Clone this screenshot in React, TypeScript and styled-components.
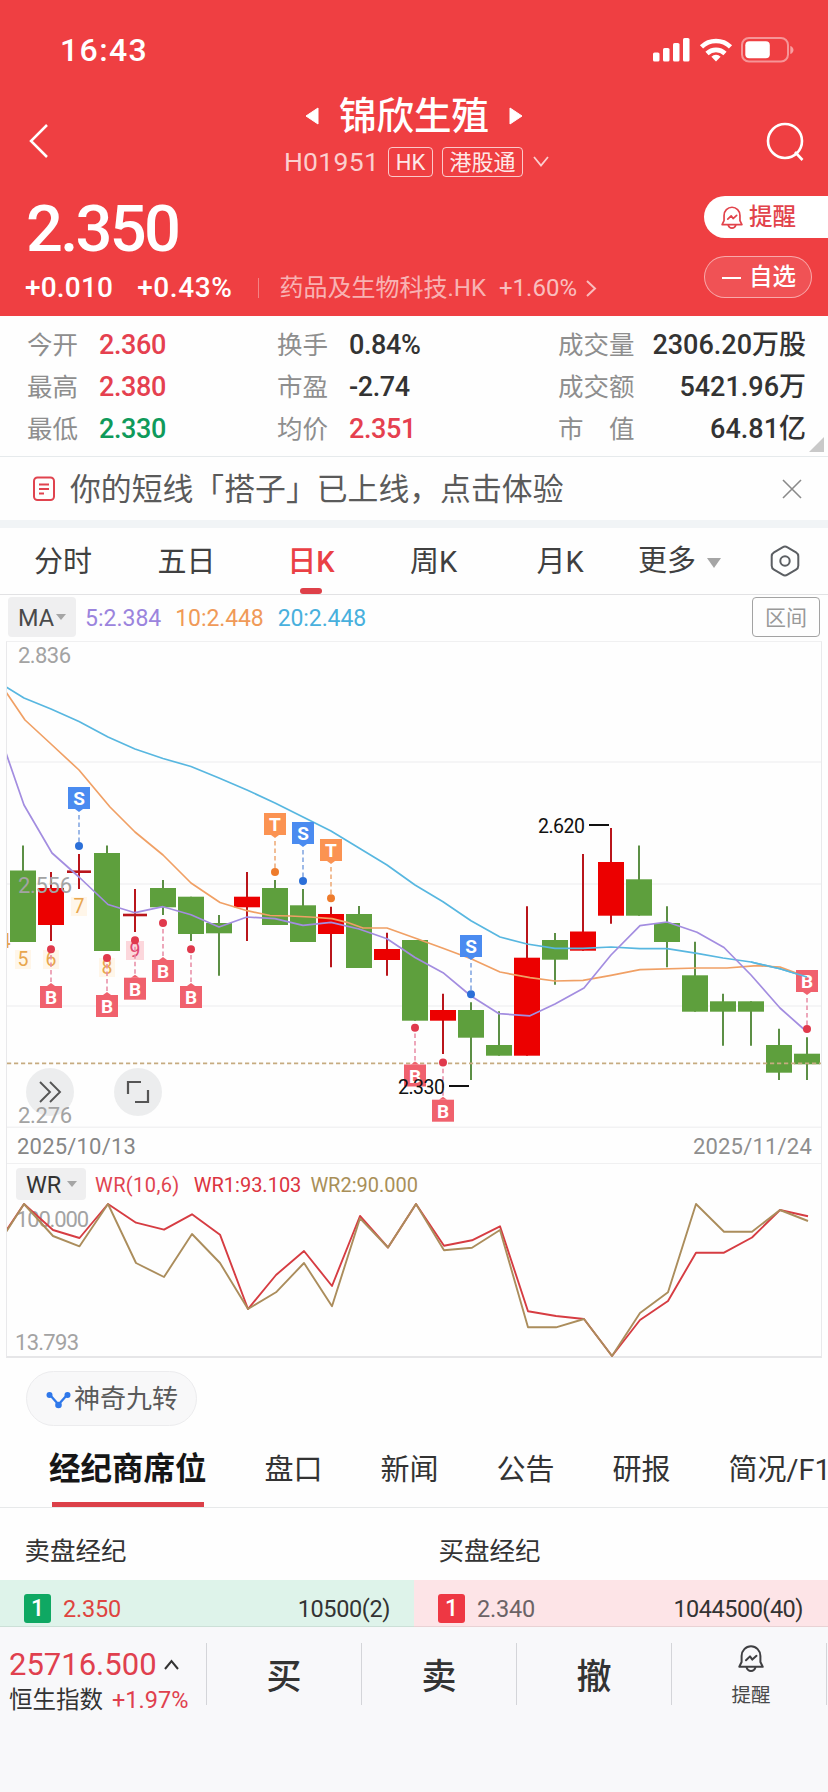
import React from "react";
import styled, { createGlobalStyle } from "styled-components";

const red = "#ef3f42";
const up = "#e5404f";
const down = "#0f9a5b";

const GlobalStyle = createGlobalStyle`
  * { box-sizing: border-box; }
  body {
    margin: 0;
    background: #f8f8fa;
    font-family: Roboto, "Noto Sans CJK SC", sans-serif;
    color: #333;
    overflow-x: hidden;
  }
`;

const Screen = styled.div`
  width: 828px;
  height: 1792px;
  overflow: hidden;
  display: flex;
  flex-direction: column;
  background: #fefefe;
`;

type TextProps = {
  $size: number;
  $spacing?: number;
  $color?: string;
  $weight?: number;
  $left?: number;
};

const Text = styled.span<TextProps>`
  display: block;
  flex: none;
  white-space: pre;
  line-height: 1.2;
  font-size: ${(p) => p.$size}px;
  letter-spacing: ${(p) => p.$spacing ?? 0}px;
  color: ${(p) => p.$color ?? "inherit"};
  font-weight: ${(p) => p.$weight ?? 400};
  margin-left: ${(p) => p.$left ?? 0}px;
`;

/* ---------- header ---------- */

const Header = styled.header`
  height: 316px;
  flex: none;
  background: ${red};
  color: #fff;
  display: flex;
  flex-direction: column;
`;

const StatusBar = styled.div`
  height: 92px;
  padding: 8px 33px 0 60px;
  display: flex;
  align-items: center;
  justify-content: space-between;
`;

const NavBar = styled.div`
  height: 96px;
  display: flex;
  justify-content: space-between;
  padding: 0 21px 0 26px;
`;

const NavSide = styled.div`
  width: 44px;
  padding-top: 27px;
`;

const NavCenter = styled.div`
  display: flex;
  flex-direction: column;
  align-items: center;
  padding-left: 1px;
`;

const TitleRow = styled.div`
  height: 48px;
  padding-right: 6px;
  display: flex;
  align-items: center;
  gap: 20px;
`;

const CodeRow = styled.div`
  height: 44px;
  display: flex;
  align-items: center;
  gap: 9px;
`;

const Tag = styled.span<{ $width: number }>`
  width: ${(p) => p.$width}px;
  height: 30px;
  border: 1.5px solid rgba(255, 255, 255, 0.72);
  border-radius: 4px;
  padding-top: 2px;
  display: flex;
  align-items: center;
  justify-content: center;
  font-size: 22px;
  line-height: 1;
  color: rgba(255, 255, 255, 0.9);
`;

const QuoteArea = styled.div`
  flex: 1;
  display: flex;
  justify-content: space-between;
`;

const PriceBlock = styled.div`
  padding-left: 25px;
`;

const PriceLine = styled.div`
  height: 82px;
  display: flex;
  align-items: center;
`;

const ChangeLine = styled.div`
  height: 36px;
  display: flex;
  align-items: center;
`;

const ThinRule = styled.i`
  width: 1px;
  height: 20px;
  margin: 0 20px 0 26px;
  background: rgba(255, 255, 255, 0.35);
`;

const QuoteActions = styled.div`
  width: 124px;
  padding-top: 8px;
  display: flex;
  flex-direction: column;
  gap: 18px;
`;

const AlertButton = styled.button`
  height: 42px;
  border: 0;
  border-radius: 21px 0 0 21px;
  background: #fff;
  color: #e2434b;
  padding: 1px 0 0 17px;
  display: flex;
  align-items: center;
  gap: 6px;
  font: 500 23.5px/1.1 Roboto, "Noto Sans CJK SC", sans-serif;
`;

const WatchButton = styled.button`
  width: 108px;
  height: 42px;
  border: 1.5px solid rgba(255, 255, 255, 0.5);
  border-radius: 21px;
  background: rgba(255, 255, 255, 0.1);
  color: #fff;
  padding: 1px 0 0 17px;
  display: flex;
  align-items: center;
  gap: 8px;
  font: 500 23.5px/1.1 Roboto, "Noto Sans CJK SC", sans-serif;
`;

const Minus = styled.i`
  width: 19px;
  height: 2px;
  background: #fff;
`;

/* ---------- stats ---------- */

const Stats = styled.section`
  position: relative;
  flex: none;
  height: 141px;
  padding: 8px 22px 7px 27px;
  display: grid;
  grid-template-columns: 250px 281px 1fr;
  grid-auto-rows: 42px;
  border-bottom: 1.5px solid #e6eaec;
`;

const Stat = styled.div<{ $spread?: boolean }>`
  display: flex;
  align-items: center;
  justify-content: ${(p) => (p.$spread ? "space-between" : "flex-start")};
`;

const Corner = styled.i`
  position: absolute;
  right: 4px;
  bottom: 4px;
  border-bottom: 15px solid #c9c9c9;
  border-left: 15px solid transparent;
`;

const Notice = styled.section`
  flex: none;
  height: 71px;
  border-bottom: 8px solid #f1f4f6;
  padding: 0 26px 0 32px;
  display: flex;
  align-items: center;
`;

const NoticeText = styled(Text)`
  padding-top: 2px;
`;

const NoticeClose = styled.span`
  margin-left: auto;
  display: flex;
`;

/* ---------- period tabs ---------- */

const PeriodTabs = styled.nav`
  flex: none;
  height: 67px;
  border-bottom: 1.5px solid #e2e2e4;
  display: grid;
  grid-template-columns: 126px 121px 128px 117px 136px 114px 86px;
`;

const PeriodTab = styled.span<{ $active?: boolean }>`
  display: flex;
  flex-direction: column;
  align-items: center;
  justify-content: space-between;
  padding-top: 14px;
  font-size: 29px;
  line-height: 40px;
  color: ${(p) => (p.$active ? "#ea4045" : "#404040")};
  font-weight: ${(p) => (p.$active ? 500 : 400)};
  &::after {
    content: "";
    width: 22px;
    height: 6px;
    border-radius: 3px;
    background: ${(p) => (p.$active ? "#de4049" : "transparent")};
  }
`;

const MoreTab = styled.span`
  display: flex;
  align-items: center;
  padding-left: 10px;
  gap: 11px;
  font-size: 29px;
  line-height: 40px;
  color: #404040;
  > i { margin-top: 3px; }
`;

const SettingsCell = styled.span`
  display: flex;
  align-items: center;
  padding-left: 28px;
`;

const Caret = styled.i<{ $w: number; $h: number }>`
  flex: none;
  border-top: ${(p) => p.$h}px solid #a5a5a5;
  border-left: ${(p) => p.$w / 2}px solid transparent;
  border-right: ${(p) => p.$w / 2}px solid transparent;
`;

/* ---------- charts ---------- */

const MaRow = styled.div`
  flex: none;
  height: 46px;
  padding: 2px 8px 4px;
  display: flex;
  align-items: center;
  > ${Text} { padding-top: 4px; }
`;

const Picker = styled.span<{ $w: number; $h: number; $gap: number; $pad: number }>`
  flex: none;
  width: ${(p) => p.$w}px;
  height: ${(p) => p.$h}px;
  border-radius: 4px;
  background: #efeff0;
  display: flex;
  align-items: center;
  padding-left: ${(p) => p.$pad}px;
  gap: ${(p) => p.$gap}px;
  color: #4a4a4a;
  > ${Text} { padding-top: 3px; }
`;

const RangeButton = styled.span`
  margin-left: auto;
  width: 68px;
  height: 40px;
  border: 1.5px solid #a3a3a3;
  border-radius: 4px;
  display: flex;
  align-items: center;
  justify-content: center;
  padding-top: 2px;
  font-size: 21px;
  line-height: 1;
  color: #999;
`;

const ChartFrame = styled.section`
  position: relative;
  flex: none;
  width: 816px;
  height: 717px;
  margin-left: 6px;
  border: 1px solid #e9e9eb;
  border-top-color: #f0f0f1;
  border-bottom: 2px solid #e6e6e8;
`;

const Plot = styled.svg`
  display: block;
  font-family: Roboto, sans-serif;
`;

const DateRow = styled.div`
  height: 36px;
  padding: 4px 9px 0 10px;
  display: flex;
  align-items: center;
  justify-content: space-between;
  border-bottom: 1.5px solid #f0f0f1;
`;

const WrRow = styled.div`
  height: 38px;
  padding: 2px 9px 0;
  display: flex;
  align-items: center;
  > ${Text} { padding-top: 2px; }
`;

const RoundButton = styled.span<{ $x: number }>`
  position: absolute;
  left: ${(p) => p.$x}px;
  top: 426px;
  width: 48px;
  height: 48px;
  border-radius: 50%;
  background: rgba(228, 230, 231, 0.72);
  display: flex;
  align-items: center;
  justify-content: center;
`;

const LowLabel = styled.span`
  position: absolute;
  left: 11px;
  top: 461px;
  font-size: 22px;
  line-height: 26px;
  letter-spacing: -0.3px;
  color: #a3a3a3;
`;

const PillRow = styled.div`
  flex: none;
  height: 80px;
  padding: 13px 26px 0;
`;

const Pill = styled.span`
  width: 171px;
  height: 55px;
  border: 1.5px solid #ececee;
  border-radius: 28px;
  background: #f8f8f9;
  display: flex;
  align-items: center;
  padding: 2px 0 0 19px;
  gap: 3px;
  color: #5a5a5a;
`;

/* ---------- broker seats ---------- */

const InfoTabs = styled.nav`
  flex: none;
  height: 70px;
  border-bottom: 1.5px solid #e7e9ea;
  display: flex;
  overflow: hidden;
  padding-left: 49px;
  gap: 58px;
`;

const InfoTab = styled.span<{ $active?: boolean }>`
  flex: none;
  height: 69px;
  display: flex;
  flex-direction: column;
  align-items: center;
  justify-content: space-between;
  padding-top: 12px;
  white-space: nowrap;
  font-size: ${(p) => (p.$active ? 31.5 : 29)}px;
  line-height: 40px;
  font-weight: ${(p) => (p.$active ? 700 : 400)};
  color: ${(p) => (p.$active ? "#161616" : "#333")};
  &::after {
    content: "";
    width: 152px;
    height: 5px;
    display: ${(p) => (p.$active ? "block" : "none")};
    background: #dc4049;
  }
`;

const SeatTable = styled.section`
  flex: none;
  height: 119px;
  display: grid;
  grid-template-columns: 1fr 1fr;
  grid-template-rows: 72px 47px;
`;

const SeatHead = styled.div`
  padding: 14px 0 0 24.5px;
  display: flex;
  align-items: center;
`;

const SeatRow = styled.div<{ $bg: string; $right: number }>`
  background: ${(p) => p.$bg};
  border-bottom: 1.5px solid rgba(0, 0, 0, 0.08);
  padding: 10px ${(p) => p.$right}px 0 24px;
  display: flex;
  align-items: center;
  > ${Text} { padding-top: 2px; }
  > :last-child { margin-left: auto; }
`;

const Rank = styled.b<{ $bg: string }>`
  width: 27px;
  height: 29px;
  margin-right: 12px;
  border-radius: 3px;
  background: ${(p) => p.$bg};
  color: #fff;
  display: flex;
  align-items: center;
  justify-content: center;
  padding-top: 1px;
  font-size: 23px;
  font-weight: 500;
`;

/* ---------- bottom bar ---------- */

const BottomBar = styled.footer`
  flex: 1;
  background: #f8f8fa;
  display: flex;
  align-items: flex-start;
  padding-top: 16px;
`;

const IndexCell = styled.div`
  width: 207px;
  height: 62px;
  border-right: 1px solid #d4d5d9;
  padding: 2px 0 0 9px;
`;

const IndexLine = styled.div<{ $h: number }>`
  height: ${(p) => p.$h}px;
  display: flex;
  align-items: center;
`;

const Action = styled.div`
  width: 155px;
  height: 62px;
  border-right: 1px solid #d4d5d9;
  padding-top: 7px;
  display: flex;
  flex-direction: column;
  align-items: center;
  justify-content: center;
`;

const AlertAction = styled(Action)`
  padding: 2px 0 0 4px;
  justify-content: flex-start;
  gap: 11px;
`;

/* ---------- data ---------- */

const RED = "#ec0000";
const GREEN = "#5e9f3d";

// [kind, high, body top, body bottom, low]
type Candle = ["r" | "g" | "x", number, number, number, number];
const candles: Candle[] = [
  ["g", 845.5, 870.5, 942, 942], ["r", 872, 888, 925, 941], ["x", 854, 871.7, 871.7, 889],
  ["g", 845.5, 853, 951, 951], ["x", 889, 915, 915, 932], ["g", 880, 888, 907.3, 915],
  ["g", 896.7, 896.7, 934, 941], ["g", 915, 923, 933.3, 975.7], ["r", 872, 896.7, 907.3, 941],
  ["g", 880, 888, 925, 925], ["g", 889, 905.3, 942, 942], ["r", 906.7, 914, 934, 967.3],
  ["g", 906, 914, 968, 968], ["r", 932.7, 949, 960, 975.7], ["g", 940, 940, 1020.7, 1020.7],
  ["r", 993.7, 1010, 1020.7, 1054], ["g", 1002.3, 1010, 1037.7, 1080], ["g", 1011.3, 1045, 1055.7, 1055.7],
  ["r", 906.3, 957.7, 1055.7, 1055.7], ["g", 933, 940, 959.7, 984.7], ["r", 854, 931.5, 950.7, 950.7],
  ["r", 828, 862, 915.7, 923.7], ["g", 845.5, 879.3, 915.7, 915.7], ["g", 906.3, 923, 942, 967.3],
  ["g", 941.7, 975.3, 1011.7, 1011.7], ["g", 993.7, 1001.3, 1011.7, 1045.7], ["g", 1001.3, 1001.3, 1011.7, 1045.7],
  ["g", 1028.7, 1045, 1072.7, 1080], ["g", 1037.3, 1053.7, 1064.3, 1080],
];

const ma5 = "6,753 24,805 52,853 79,877 108,904.5 135,912.7 163,906.7 191,914.7 219,927 247,917 275,918.7 303,925.3 331,922.3 359,929 387,938.7 415,957.5 443,972.7 471,996 499,1013.7 530,1015.8 555,1004 584,988 611,955 640,925.7 667,922 697,932.3 724,947.5 751,975 780,1008 807,1032";
const ma10 = "6,692 25,720 51,744 79,770 110,807 135,832 163,855 191,883 220,902.5 247,910.7 270,915.5 290,916 310,917 332,918.7 347,922.3 363,928 387,928 417,938.7 443,948.3 471,958.7 500,972 530,977.7 555,981 583,980.3 611,975.3 640,969.7 697,968 727,968 757,965.7 780,967 807,977";
const ma20 = "6,687 24,698 51,709 79,721.5 108,737 135,749 163,758.5 191,766.5 219,778 247,790 275,803 303,817 331,831 359,848 387,865 415,885 443,901.7 471,920.7 500,937 527,944 555,948.3 583,948.3 611,947 640,948.7 667,948.7 697,953.3 723,958 751,962 780,968.7 807,977";

const wr1 = "6,1231 24,1204 53,1230 79.5,1238 108,1204 136,1222.7 164,1229.7 192,1214.3 220,1234.7 248,1309 276,1275 304,1251 332,1286 360,1216 388,1247.5 416,1204 444,1245.7 472,1240.3 500,1226.3 528,1311.3 556,1316 584,1319 612,1356 640,1320 668,1301 696,1252.7 724,1252.7 752,1237.5 780,1210 808,1216.3";
const wr2 = "6,1232 24,1204 53,1236 79.5,1246.3 108,1204 136,1263 164,1277 192,1234 220,1263 248,1309 276,1292.3 304,1263 332,1306.3 360,1218.3 388,1247.5 416,1204 444,1250.3 472,1247.7 500,1230 528,1327.3 556,1327.3 584,1319 612,1356 640,1313 668,1292.3 696,1204 724,1231.7 752,1231.7 780,1210 808,1221";

type Mark = { x: number; top: number; dot: number; letter: "B" | "S" | "T" };
const marks: Mark[] = [
  { x: 79, top: 787, dot: 846, letter: "S" },
  { x: 275, top: 813, dot: 872, letter: "T" },
  { x: 303, top: 822, dot: 881, letter: "S" },
  { x: 331, top: 839, dot: 898.3, letter: "T" },
  { x: 471, top: 935, dot: 994.3, letter: "S" },
  { x: 51, top: 986, dot: 949.2, letter: "B" },
  { x: 107, top: 995, dot: 958, letter: "B" },
  { x: 135, top: 977.7, dot: 940.3, letter: "B" },
  { x: 163, top: 960, dot: 923, letter: "B" },
  { x: 191, top: 986, dot: 949.2, letter: "B" },
  { x: 415, top: 1064.5, dot: 1027.7, letter: "B" },
  { x: 443, top: 1099.7, dot: 1062.5, letter: "B" },
  { x: 807, top: 970, dot: 1029, letter: "B" },
];
const markColors = {
  B: { box: "#f0616d", dot: "#e0394c", line: "#e88ba4" },
  S: { box: "#4a8bf0", dot: "#2b6fd8", line: "#7ea2e0" },
  T: { box: "#fb9352", dot: "#ee7b2c", line: "#eda873" },
};

const CandleBar = ({ c, x }: { c: Candle; x: number }) => {
  const [kind, high, top, bottom, low] = c;
  const isGreen = kind === "g";
  return (
    <g>
      <line x1={x} x2={x} y1={high} y2={low} stroke={isGreen ? "#5c8f45" : "#b9151b"} strokeWidth={2} />
      {kind === "x" ? (
        <rect x={x - 12} y={top - 1.3} width={24} height={2.6} fill="#b9151b" />
      ) : (
        <rect x={x - 13} y={top} width={26} height={bottom - top} fill={isGreen ? GREEN : RED} />
      )}
    </g>
  );
};

const MarkFlag = ({ x, top, dot, letter }: Mark) => {
  const c = markColors[letter];
  const below = dot > top;
  const edge = below ? top + 22 : top;
  const tip = below ? edge + 3 : edge - 3;
  return (
    <g>
      <line x1={x} x2={x} y1={tip + (below ? 3 : -1)} y2={dot} stroke={c.line} strokeWidth={1.5} strokeDasharray="4.5 3" />
      <circle cx={x} cy={dot} r={4} fill={c.dot} />
      <rect x={x - 11} y={top} width={22} height={22} fill={c.box} />
      <polygon points={`${x - 4},${edge} ${x + 4},${edge} ${x},${tip}`} fill={c.box} />
      <text x={x} y={top + 18} textAnchor="middle" fontSize={19} fontWeight={700} fill="#fff">{letter}</text>
    </g>
  );
};

const counts = [
  { n: "5", x: 23, y: 966 }, { n: "6", x: 51, y: 966 }, { n: "7", x: 79, y: 913 }, { n: "8", x: 107, y: 974 },
];

const Axis = ({ x, y, w, children }: { x: number; y: number; w: number; children: string }) => (
  <text x={x} y={y} fontSize={22} fill="#a3a3a3" textLength={w}>{children}</text>
);

const PricePlot = () => (
  <Plot width={814} height={486} viewBox="7 642 814 486">
    {[762, 884, 1006, 1127.3].map((y) => (
      <line key={y} x1={7} x2={821} y1={y} y2={y} stroke="#f2f2f3" strokeWidth={1.5} />
    ))}
    <text x={5} y={948} fontSize={20} fontWeight={500} textAnchor="middle" fill="#e8a64d">4</text>
    {candles.map((c, i) => <CandleBar key={i} c={c} x={23 + i * 28} />)}
    <g fontSize={19.5} textAnchor="middle">
      {counts.map(({ n, x, y }) => (
        <g key={n}>
          <rect x={x - 8} y={y - 16} width={16} height={19} fill="#fff6e9" />
          <text x={x} y={y} fill="#e8a64d">{n}</text>
        </g>
      ))}
      <rect x={126} y={941} width={18} height={19} fill="#fcd7dc" />
      <text x={135} y={957} fill="#e0446f">9</text>
    </g>
    <Axis x={18} y={663} w={53}>2.836</Axis>
    <Axis x={18} y={893} w={54}>2.556</Axis>
    <line x1={7} x2={821} y1={1063.3} y2={1063.3} stroke="#c6ab80" strokeWidth={1.8} strokeDasharray="4.2 2.8" />
    <g fill="none" strokeWidth={1.7} strokeLinejoin="round">
      <polyline points={ma20} stroke="#58b7e0" />
      <polyline points={ma10} stroke="#f0a065" />
      <polyline points={ma5} stroke="#a38de0" />
    </g>
    {marks.map((m) => <MarkFlag key={`${m.x}`} {...m} />)}
    <polyline points={"751,962 780,968.7 807,977"} fill="none" stroke="#58b7e0" strokeWidth={1.7} />
    <g fontSize={19.5} fill="#111" stroke="none">
      <text x={538} y={832.5} textLength={47}>2.620</text>
      <rect x={589} y={824} width={20} height={2} />
      <text x={398} y={1094} textLength={47}>2.330</text>
      <rect x={449} y={1085} width={20} height={2} />
    </g>
  </Plot>
);

const WrPlot = () => (
  <Plot width={814} height={156} viewBox="7 1202 814 156">
    <Axis x={16} y={1227} w={73}>100.000</Axis>
    <Axis x={15} y={1350} w={64}>13.793</Axis>
    <g fill="none" strokeWidth={1.9} strokeLinejoin="round">
      <polyline points={wr1} stroke="#d63c42" />
      <polyline points={wr2} stroke="#ab8d5c" />
    </g>
  </Plot>
);

/* ---------- icons ---------- */

const StatusIcons = () => (
  <svg width={142} height={26} viewBox="653 37 142 26" fill="#fff">
    <rect x={653} y={52.5} width={6.5} height={9} rx={1.6} />
    <rect x={663} y={48} width={6.5} height={13.5} rx={1.6} />
    <rect x={673} y={43} width={6.5} height={18.5} rx={1.6} />
    <rect x={683} y={38} width={6.5} height={23.5} rx={1.6} />
    <g fill="none" stroke="#fff" strokeWidth={4.6}>
      <path d="M701.5 46.8a21 21 0 0 1 29 0" />
      <path d="M707 53.500a13 13 0 0 1 18 0" />
    </g>
    <path d="M716 61.5l-4.6-4.8a6.6 6.6 0 0 1 9.2 0z" />
    <rect x={742} y={38} width={46} height={23.5} rx={7} fill="none" stroke="#fff" strokeOpacity={0.45} strokeWidth={2} />
    <rect x={745.3} y={41.2} width={24.5} height={17} rx={4} />
    <path d="M790.3 46v8c1.8-.6 3.2-2.1 3.2-4s-1.4-3.4-3.2-4z" opacity={0.5} />
  </svg>
);

const BellSvg = styled.svg`
  flex: none;
`;

const BellIcon = ({ w, h, color }: { w: number; h: number; color: string }) => (
  <BellSvg width={w} height={h} viewBox="0 0 26 28" fill="none" stroke={color} strokeWidth={2} strokeLinejoin="round" strokeLinecap="round">
    <path d="M3.600 17V11a9.400 9.700 0 0 1 18.800 0v6l2.300 4.800H1.300z" />
    <path d="M8.500 22.200c1.500 5 7.500 5 9 0" />
    <path d="M8 15.300l4-3.900 2.300 3.200 4.200-3.800" />
  </BellSvg>
);

const Chevron = ({ w, h, d, color, sw = 2 }: { w: number; h: number; d: string; color: string; sw?: number }) => (
  <svg width={w} height={h} viewBox={`0 0 ${w} ${h}`} fill="none" stroke={color} strokeWidth={sw}>
    <path d={d} />
  </svg>
);

const Label = ({ children }: { children: string }) => (
  <Text $size={25.5} $color="#8e8e8e">{children}</Text>
);

const Value = ({ children, color }: { children: string; color?: string }) => (
  <Text $size={27} $weight={500} $left={21} $spacing={-0.4} $color={color}>{children}</Text>
);

export default function App() {
  return (
    <>
      <GlobalStyle />
      <Screen>
        <Header>
          <StatusBar>
            <Text $size={32} $weight={500} $spacing={1.4}>16:43</Text>
            <StatusIcons />
          </StatusBar>
          <NavBar>
            <NavSide>
              <svg width={26} height={42} viewBox="26 119 26 42" fill="none" stroke="#fff" strokeWidth={2.5}>
                <path d="M47 125L31 141L47 157" />
              </svg>
            </NavSide>
            <NavCenter>
              <TitleRow>
                <svg width={14} height={18} viewBox="0 0 14 18"><path d="M13 1v16L1 9z" fill="#fff" stroke="#fff" strokeLinejoin="round" /></svg>
                <Text $size={37.5} $weight={500}>锦欣生殖</Text>
                <svg width={14} height={18} viewBox="0 0 14 18"><path d="M1 1v16l12-8z" fill="#fff" stroke="#fff" strokeLinejoin="round" /></svg>
              </TitleRow>
              <CodeRow>
                <Text $size={26.5} $spacing={0.3} $color="rgba(255,255,255,.75)">H01951</Text>
                <Tag $width={45}>HK</Tag>
                <Tag $width={81}>港股通</Tag>
                <Chevron w={18} h={12} d="M2 1l7 8.500 7-8.500" color="rgba(255,255,255,.75)" sw={1.8} />
              </CodeRow>
            </NavCenter>
            <NavSide>
              <svg width={44} height={44} viewBox="762 118 44 44" fill="none" stroke="#fff" strokeWidth={2.6}>
                <circle cx={784} cy={140} r={17} />
                <path d="M794 151l7.500 8" />
              </svg>
            </NavSide>
          </NavBar>
          <QuoteArea>
            <PriceBlock>
              <PriceLine>
                <Text $size={65} $weight={500} $spacing={-2.7} $left={1}>2.350</Text>
              </PriceLine>
              <ChangeLine>
                <Text $size={28} $weight={500} $spacing={0.2}>+0.010</Text>
                <Text $size={28} $weight={500} $spacing={0.6} $left={24}>+0.43%</Text>
                <ThinRule />
                <Text $size={24} $color="rgba(255,255,255,.62)">药品及生物科技.HK</Text>
                <Text $size={24} $color="rgba(255,255,255,.68)" $left={13}>+1.60%</Text>
                <Chevron w={22} h={20} d="M10 3l8 7.500-8 7.500" color="rgba(255,255,255,.65)" />
              </ChangeLine>
            </PriceBlock>
            <QuoteActions>
              <AlertButton><BellIcon w={22} h={24} color="#e2434b" />提醒</AlertButton>
              <WatchButton><Minus />自选</WatchButton>
            </QuoteActions>
          </QuoteArea>
        </Header>

        <Stats>
          <Stat><Label>今开</Label><Value color={up}>2.360</Value></Stat>
          <Stat><Label>换手</Label><Value>0.84%</Value></Stat>
          <Stat $spread><Label>成交量</Label><Text $size={27} $weight={500}>2306.20万股</Text></Stat>
          <Stat><Label>最高</Label><Value color={up}>2.380</Value></Stat>
          <Stat><Label>市盈</Label><Value>-2.74</Value></Stat>
          <Stat $spread><Label>成交额</Label><Text $size={27} $weight={500}>5421.96万</Text></Stat>
          <Stat><Label>最低</Label><Value color={down}>2.330</Value></Stat>
          <Stat><Label>均价</Label><Value color={up}>2.351</Value></Stat>
          <Stat $spread><Label>市　值</Label><Text $size={27} $weight={500}>64.81亿</Text></Stat>
          <Corner />
        </Stats>

        <Notice>
          <svg width={24} height={26} viewBox="0 0 24 26" fill="none" stroke="#e0434e" strokeWidth={2}>
            <rect x={2} y={1.5} width={20} height={22.5} rx={3.500} />
            <path d="M7 8.500h10M7 13h10M7 17.500h5" />
          </svg>
          <NoticeText $size={30.85} $left={14} $color="#5a5a5a">你的短线「搭子」已上线，点击体验</NoticeText>
          <NoticeClose>
            <Chevron w={20} h={20} d="M1 1l18 18M19 1L1 19" color="#8a8a8a" sw={1.6} />
          </NoticeClose>
        </Notice>

        <PeriodTabs>
          <PeriodTab>分时</PeriodTab>
          <PeriodTab>五日</PeriodTab>
          <PeriodTab $active>日K</PeriodTab>
          <PeriodTab>周K</PeriodTab>
          <PeriodTab>月K</PeriodTab>
          <MoreTab>更多<Caret $w={15} $h={10} /></MoreTab>
          <SettingsCell>
            <svg width={30} height={32} viewBox="0 0 30 32" fill="none" stroke="#5c5f63" strokeWidth={2} strokeLinejoin="round">
              <path d="M12.500 2.300q2.500-1.400 5 0L26 7.300q2.300 1.400 2.300 4v9.400q0 2.600-2.300 4l-8.500 5q-2.500 1.400-5 0L4 24.700q-2.300-1.400-2.300-4v-9.400q0-2.600 2.300-4z" />
              <circle cx={15} cy={16} r={4.700} />
            </svg>
          </SettingsCell>
        </PeriodTabs>

        <MaRow>
          <Picker $w={68} $h={40} $pad={10} $gap={2}><Text $size={23.5}>MA</Text><Caret $w={10} $h={6} /></Picker>
          <Text $size={23} $left={9} $color="#9b84dd" $spacing={0}>5:2.384</Text>
          <Text $size={23} $left={14} $color="#f09a58" $spacing={-0.1}>10:2.448</Text>
          <Text $size={23} $left={14} $color="#48b0dd" $spacing={-0.1}>20:2.448</Text>
          <RangeButton>区间</RangeButton>
        </MaRow>

        <ChartFrame>
          <PricePlot />
          <RoundButton $x={19}>
            <Chevron w={24} h={22} d="M2 1l10 10L2 21M12 1l10 10-10 10" color="#555" sw={1.9} />
          </RoundButton>
          <RoundButton $x={107}>
            <Chevron w={24} h={24} d="M2 14V2h13M9 22h13V10" color="#555" sw={2.2} />
          </RoundButton>
          <LowLabel>2.276</LowLabel>
          <DateRow>
            <Text $size={22} $spacing={0.2} $color="#868686">2025/10/13</Text>
            <Text $size={22} $spacing={0.2} $color="#8e8e8e">2025/11/24</Text>
          </DateRow>
          <WrRow>
            <Picker $w={70} $h={32} $pad={10} $gap={6}><Text $size={23.5} $color="#333">WR</Text><Caret $w={10} $h={6} /></Picker>
            <Text $size={20} $left={9} $spacing={0.4} $color="#e04450">WR(10,6)</Text>
            <Text $size={20} $left={14} $color="#dc3440">WR1:93.103</Text>
            <Text $size={20} $left={9} $color="#a98f58">WR2:90.000</Text>
          </WrRow>
          <WrPlot />
        </ChartFrame>

        <PillRow>
          <Pill>
            <svg width={25} height={18} viewBox="0 0 25 18" fill="#2f78ea">
              <path d="M4 4l8.500 9.500L21 4" fill="none" stroke="#2f78ea" strokeWidth={2.300} />
              <circle cx={3.500} cy={4} r={3} /><circle cx={21.500} cy={4} r={3} /><circle cx={12.500} cy={14} r={3.300} />
            </svg>
            <Text $size={26}>神奇九转</Text>
          </Pill>
        </PillRow>

        <InfoTabs>
          <InfoTab $active>经纪商席位</InfoTab>
          <InfoTab>盘口</InfoTab>
          <InfoTab>新闻</InfoTab>
          <InfoTab>公告</InfoTab>
          <InfoTab>研报</InfoTab>
          <InfoTab>简况/F10</InfoTab>
        </InfoTabs>

        <SeatTable>
          <SeatHead><Text $size={25.5}>卖盘经纪</Text></SeatHead>
          <SeatHead><Text $size={25.5}>买盘经纪</Text></SeatHead>
          <SeatRow $bg="#def3ea" $right={24}>
            <Rank $bg="#0fa863">1</Rank>
            <Text $size={23.5} $spacing={-0.2} $color="#df443f">2.350</Text>
            <Text $size={23.5} $spacing={-0.4}>10500(2)</Text>
          </SeatRow>
          <SeatRow $bg="#fde4e7" $right={25}>
            <Rank $bg="#ee3743">1</Rank>
            <Text $size={23.5} $spacing={-0.2} $color="#6b6366">2.340</Text>
            <Text $size={23.5} $spacing={-0.5}>1044500(40)</Text>
          </SeatRow>
        </SeatTable>

        <BottomBar>
          <IndexCell>
            <IndexLine $h={40}>
              <Text $size={31} $color="#e0404e">25716.500</Text>
              <Chevron w={24} h={12} d="M8 10l6.500-8 6.500 8" color="#333" />
            </IndexLine>
            <IndexLine $h={30}>
              <Text $size={23.5}>恒生指数</Text>
              <Text $size={23.5} $left={9} $color="#e0404e">+1.97%</Text>
            </IndexLine>
          </IndexCell>
          <Action><Text $size={35} $weight={500}>买</Text></Action>
          <Action><Text $size={35} $weight={500}>卖</Text></Action>
          <Action><Text $size={35} $weight={500}>撤</Text></Action>
          <AlertAction>
            <BellIcon w={26} h={28} color="#3f3f42" />
            <Text $size={19.5} $color="#4a4a4a">提醒</Text>
          </AlertAction>
        </BottomBar>
      </Screen>
    </>
  );
}
